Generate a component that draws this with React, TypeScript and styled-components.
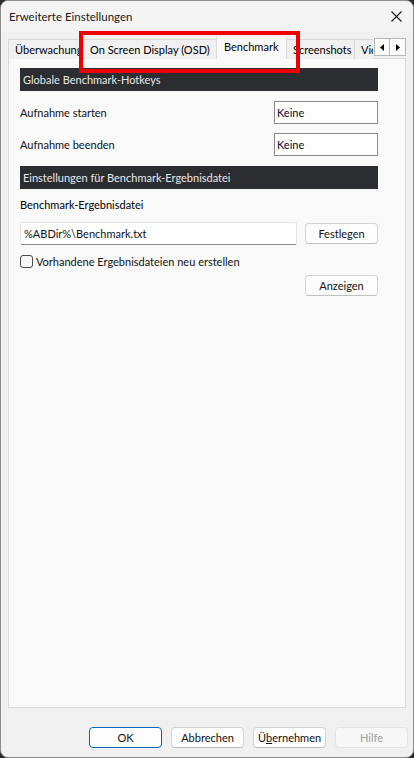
import React from 'react';
import styled, { createGlobalStyle, css } from 'styled-components';

const GlobalStyle = createGlobalStyle`
  html, body {
    margin: 0;
    padding: 0;
    background: #2b2b2b;
  }
  * {
    box-sizing: border-box;
  }
`;

const FONT = `"Segoe UI", Lato, "Liberation Sans", sans-serif`;

interface TabProps {
  width: number;
  selected?: boolean;
}

const tabs: { label: string; width: number; selected?: boolean }[] = [
  { label: 'Überwachung', width: 76 },
  { label: 'On Screen Display (OSD)', width: 135 },
  { label: 'Benchmark', width: 69, selected: true },
  { label: 'Screenshots', width: 69 },
  { label: 'Video', width: 60 },
];

function App() {
  return (
    <>
      <GlobalStyle />
      <StyledWindow>
        <StyledTitleBar>
          <StyledTitle>Erweiterte Einstellungen</StyledTitle>
          <StyledClose aria-label="Schließen">
            <svg width="11" height="11" viewBox="0 0 11 11">
              <path d="M0.5 0.5 L10.5 10.5 M10.5 0.5 L0.5 10.5" stroke="#1a1a1a" strokeWidth="1.1" />
            </svg>
          </StyledClose>
        </StyledTitleBar>

        <StyledBody>
          <StyledTabStrip>
            <StyledTabs>
              {tabs.map((tab) => (
                <StyledTab key={tab.label} width={tab.width} selected={tab.selected}>
                  {tab.label}
                </StyledTab>
              ))}
            </StyledTabs>
            <StyledScroller>
              <StyledScrollButton>
                <svg width="4" height="7" viewBox="0 0 4 7">
                  <path d="M4 0 L0 3.5 L4 7 Z" fill="#000" />
                </svg>
              </StyledScrollButton>
              <StyledScrollButton>
                <svg width="4" height="7" viewBox="0 0 4 7">
                  <path d="M0 0 L4 3.5 L0 7 Z" fill="#000" />
                </svg>
              </StyledScrollButton>
            </StyledScroller>
          </StyledTabStrip>

          <StyledPanel>
            <StyledSectionHeader>Globale Benchmark-Hotkeys</StyledSectionHeader>
            <StyledHotkeyRow>
              <StyledLabel>Aufnahme starten</StyledLabel>
              <StyledHotkeyBox>Keine</StyledHotkeyBox>
            </StyledHotkeyRow>
            <StyledHotkeyRow>
              <StyledLabel>Aufnahme beenden</StyledLabel>
              <StyledHotkeyBox>Keine</StyledHotkeyBox>
            </StyledHotkeyRow>

            <StyledSectionHeader>Einstellungen für Benchmark-Ergebnisdatei</StyledSectionHeader>
            <StyledFieldCaption>Benchmark-Ergebnisdatei</StyledFieldCaption>
            <StyledFileRow>
              <StyledPathInput>%ABDir%\Benchmark.txt</StyledPathInput>
              <StyledButton>Festlegen</StyledButton>
            </StyledFileRow>
            <StyledCheckRow>
              <StyledCheckbox />
              <StyledLabel>Vorhandene Ergebnisdateien neu erstellen</StyledLabel>
            </StyledCheckRow>
            <StyledActionRow>
              <StyledButton>Anzeigen</StyledButton>
            </StyledActionRow>
          </StyledPanel>

          <StyledFooter>
            <StyledButton variant="default">OK</StyledButton>
            <StyledButton>Abbrechen</StyledButton>
            <StyledButton>
              Ü<u>b</u>ernehmen
            </StyledButton>
            <StyledButton variant="disabled">Hilfe</StyledButton>
          </StyledFooter>
        </StyledBody>

        <StyledHighlight />
      </StyledWindow>
    </>
  );
}

const StyledWindow = styled.div`
  position: relative;
  display: flex;
  flex-direction: column;
  width: 414px;
  height: 758px;
  background: #f0f0f0;
  border: 1px solid #8c8c8c;
  border-radius: 8px;
  overflow: hidden;
  font-family: ${FONT};
  font-size: 11px;
  color: #000;
`;

const StyledTitleBar = styled.div`
  display: flex;
  align-items: center;
  justify-content: space-between;
  height: 31px;
  padding: 0 0 0 8px;
  background: #f3f3f3;
`;

const StyledTitle = styled.span`
  font-size: 11.5px;
  color: #1a1a1a;
`;

const StyledClose = styled.div`
  display: flex;
  align-items: center;
  justify-content: center;
  width: 46px;
  height: 31px;
  padding-left: 12px;
`;

const StyledBody = styled.div`
  flex: 1;
  display: flex;
  flex-direction: column;
  padding: 5px 7px 9px 7px;
`;

const StyledTabStrip = styled.div`
  position: relative;
  display: flex;
  align-items: flex-end;
  height: 22px;
  z-index: 1;
`;

const StyledTabs = styled.div`
  display: flex;
  align-items: flex-end;
  width: 367px;
  height: 22px;
  overflow: hidden;
`;

const StyledTab = styled.div<TabProps>`
  flex: none;
  width: ${({ width }) => width}px;
  height: 20px;
  padding: 1px 0 0 6px;
  white-space: nowrap;
  overflow: hidden;
  background: #f0f0f0;
  border: 1px solid #d9d9d9;
  border-bottom: none;
  margin-right: -1px;
  line-height: 17px;
  ${({ selected }) =>
    selected &&
    css`
      position: relative;
      height: 23px;
      margin: 0 -1px 0 -1px;
      width: ${({ width }: TabProps) => width + 2}px;
      background: #f9f9f9;
      padding: 0 0 0 7px;
      line-height: 19px;
      z-index: 2;
    `};
`;

const StyledScroller = styled.div`
  display: flex;
  align-self: flex-start;
  margin-top: 1px;
  margin-left: 1px;
`;

const StyledScrollButton = styled.div`
  display: flex;
  align-items: center;
  justify-content: center;
  width: 16px;
  height: 18px;
  background: #fbfbfb;
  border: 1px solid #b5b5b5;
  & + & {
    border-left: none;
  }
`;

const StyledPanel = styled.div`
  flex: 1;
  display: flex;
  flex-direction: column;
  margin-top: -1px;
  padding: 9px 27px 0 11px;
  background: #f9f9f9;
  border: 1px solid #d9d9d9;
`;

const StyledSectionHeader = styled.div`
  display: flex;
  align-items: center;
  height: 23px;
  padding-left: 3px;
  background: #2c2d31;
  color: #e8e8e8;
`;

const StyledHotkeyRow = styled.div`
  display: flex;
  align-items: center;
  justify-content: space-between;
  height: 23px;
  margin-top: 10px;
  & + & {
    margin-top: 9px;
  }
  & + ${StyledSectionHeader} {
    margin-top: 10px;
  }
`;

const StyledLabel = styled.span`
  white-space: nowrap;
  color: #111;
`;

const StyledHotkeyBox = styled.div`
  display: flex;
  align-items: center;
  width: 104px;
  height: 23px;
  padding-left: 2px;
  background: #fff;
  border: 1px solid #8a8a8a;
  color: #0a0a2a;
`;

const StyledFieldCaption = styled.div`
  height: 16px;
  margin-top: 8px;
  line-height: 16px;
`;

const StyledFileRow = styled.div`
  display: flex;
  align-items: center;
  justify-content: space-between;
  margin-top: 9px;
`;

const StyledPathInput = styled.div`
  display: flex;
  align-items: center;
  width: 277px;
  height: 23px;
  padding-left: 3px;
  background: #fff;
  border: 1px solid #e5e5e5;
  border-bottom-color: #8a8a8a;
  border-radius: 2px;
  color: #111;
`;

const StyledButton = styled.div<{ variant?: 'default' | 'disabled' }>`
  display: flex;
  align-items: center;
  justify-content: center;
  width: 73px;
  height: 21px;
  background: #fdfdfd;
  border: 1px solid #d3d3d3;
  border-bottom-color: #c0c0c0;
  border-radius: 4px;
  color: #111;
  ${({ variant }) =>
    variant === 'default' &&
    css`
      border-color: #0067c0;
    `};
  ${({ variant }) =>
    variant === 'disabled' &&
    css`
      background: #f7f7f7;
      border-color: #e3e3e3;
      color: #a0a0a0;
    `};
`;

const StyledCheckRow = styled.div`
  display: flex;
  align-items: center;
  gap: 3px;
  height: 14px;
  margin-top: 9px;
`;

const StyledCheckbox = styled.div`
  width: 13px;
  height: 13px;
  background: #f6f6f6;
  border: 1px solid #4a4a4a;
  border-radius: 3px;
`;

const StyledActionRow = styled.div`
  display: flex;
  justify-content: flex-end;
  margin-top: 7px;
`;

const StyledFooter = styled.div`
  display: flex;
  justify-content: flex-end;
  gap: 9px;
  margin-right: -2px;
  padding: 19px 0 0;
`;

const StyledHighlight = styled.div`
  position: absolute;
  left: 78px;
  top: 30px;
  width: 221px;
  height: 42px;
  border: 4px solid #ee0000;
  pointer-events: none;
  z-index: 5;
`;

export default App;
